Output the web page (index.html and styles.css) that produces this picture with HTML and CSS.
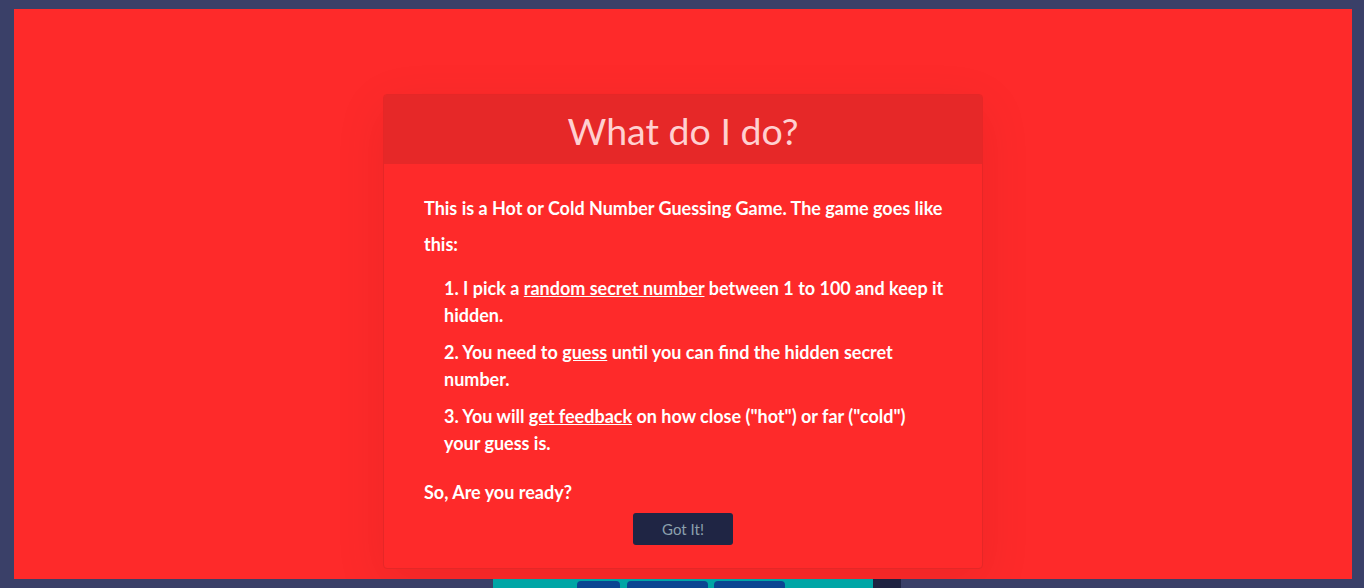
FILE: index.html
```html
<!DOCTYPE html>
<html lang="en">
<head>
<meta charset="utf-8">
<title>Hot or Cold</title>
<link rel="stylesheet" href="styles.css">
</head>
<body>
  <main class="game">
    <div class="board">
      <div class="board-main">
        <span class="nav-btn nav-btn-a"></span>
        <span class="nav-btn nav-btn-b"></span>
        <span class="nav-btn nav-btn-c"></span>
      </div>
      <div class="board-side"></div>
    </div>
  </main>

  <div class="overlay">
    <section class="modal">
      <header class="modal-header">
        <h1 class="modal-title">What do I do?</h1>
      </header>
      <div class="modal-body">
        <p class="intro">This is a Hot or Cold Number Guessing Game. The game goes like this:</p>
        <ul class="steps">
          <li>1. I pick a <a class="link">random secret number</a> between 1 to 100 and keep it hidden.</li>
          <li>2. You need to <a class="link">guess</a> until you can find the hidden secret number.</li>
          <li>3. You will <a class="link">get feedback</a> on how close ("hot") or far ("cold") your guess is.</li>
        </ul>
        <p class="ready">So, Are you ready?</p>
        <div class="actions">
          <button class="got-it" type="button">Got It!</button>
        </div>
      </div>
    </section>
  </div>
</body>
</html>
```

FILE: styles.css
```css
html, body {
  margin: 0;
  padding: 0;
}

body {
  width: 1364px;
  height: 588px;
  overflow: hidden;
  background: #3a4068;
  font-family: Lato, "Open Sans", "Liberation Sans", sans-serif;
}

/* game behind the overlay */
.game {
  padding-top: 579px;
}

.board {
  display: flex;
  margin-left: 493px;
  height: 9px;
}

.board-main {
  width: 380px;
  background: #00a5a5;
  display: flex;
  gap: 7px;
  padding: 2px 0 0 84px;
  box-sizing: border-box;
}

.board-side {
  width: 28px;
  background: #1f2342;
}

.nav-btn {
  display: block;
  height: 7px;
  background: #0b4592;
  border-radius: 4px 4px 0 0;
}

.nav-btn-a { width: 43px; }
.nav-btn-b { width: 81px; }
.nav-btn-c { width: 71px; margin-left: -1px; }

/* overlay */
.overlay {
  position: fixed;
  left: 14px;
  top: 9px;
  width: 1338px;
  height: 570px;
  background: #fe2a2a;
  overflow: hidden;
}

.modal {
  width: 600px;
  box-sizing: border-box;
  margin: 85px auto 0;
  border: 1px solid #e52727;
  border-radius: 4px;
  background: #fe2a2a;
  box-shadow: 0 14px 50px rgba(90, 0, 0, 0.10);
}

.modal-header {
  background: #e62828;
  height: 69px;
  display: flex;
  align-items: center;
  justify-content: center;
  border-radius: 3px 3px 0 0;
}

.modal-title {
  margin: 0;
  font-size: 37.5px;
  font-weight: 400;
  color: #ffd0d0;
  line-height: 1;
  padding-top: 2px;
}

.modal-body {
  padding: 26px 38px 23px 40px;
  color: #ffffff;
  font-weight: 700;
  font-size: 18px;
}

.intro {
  margin: 0;
  line-height: 36px;
}

.steps {
  list-style: none;
  margin: 13px 0 0;
  padding: 0 0 0 20px;
  display: flex;
  flex-direction: column;
  gap: 10px;
}

.steps li {
  line-height: 27px;
}

.link {
  color: #ffffff;
  text-decoration: underline;
}

.ready {
  margin: 17px 0 0;
  line-height: 36px;
}

.actions {
  display: flex;
  justify-content: center;
  margin-top: 3px;
  padding-right: 2px;
}

.got-it {
  width: 100px;
  height: 32px;
  border: 0;
  border-radius: 3px;
  background: #1f2544;
  color: #8ca0ad;
  font-family: Lato, "Open Sans", "Liberation Sans", sans-serif;
  font-size: 15px;
  font-weight: 400;
  padding: 0;
}
```
